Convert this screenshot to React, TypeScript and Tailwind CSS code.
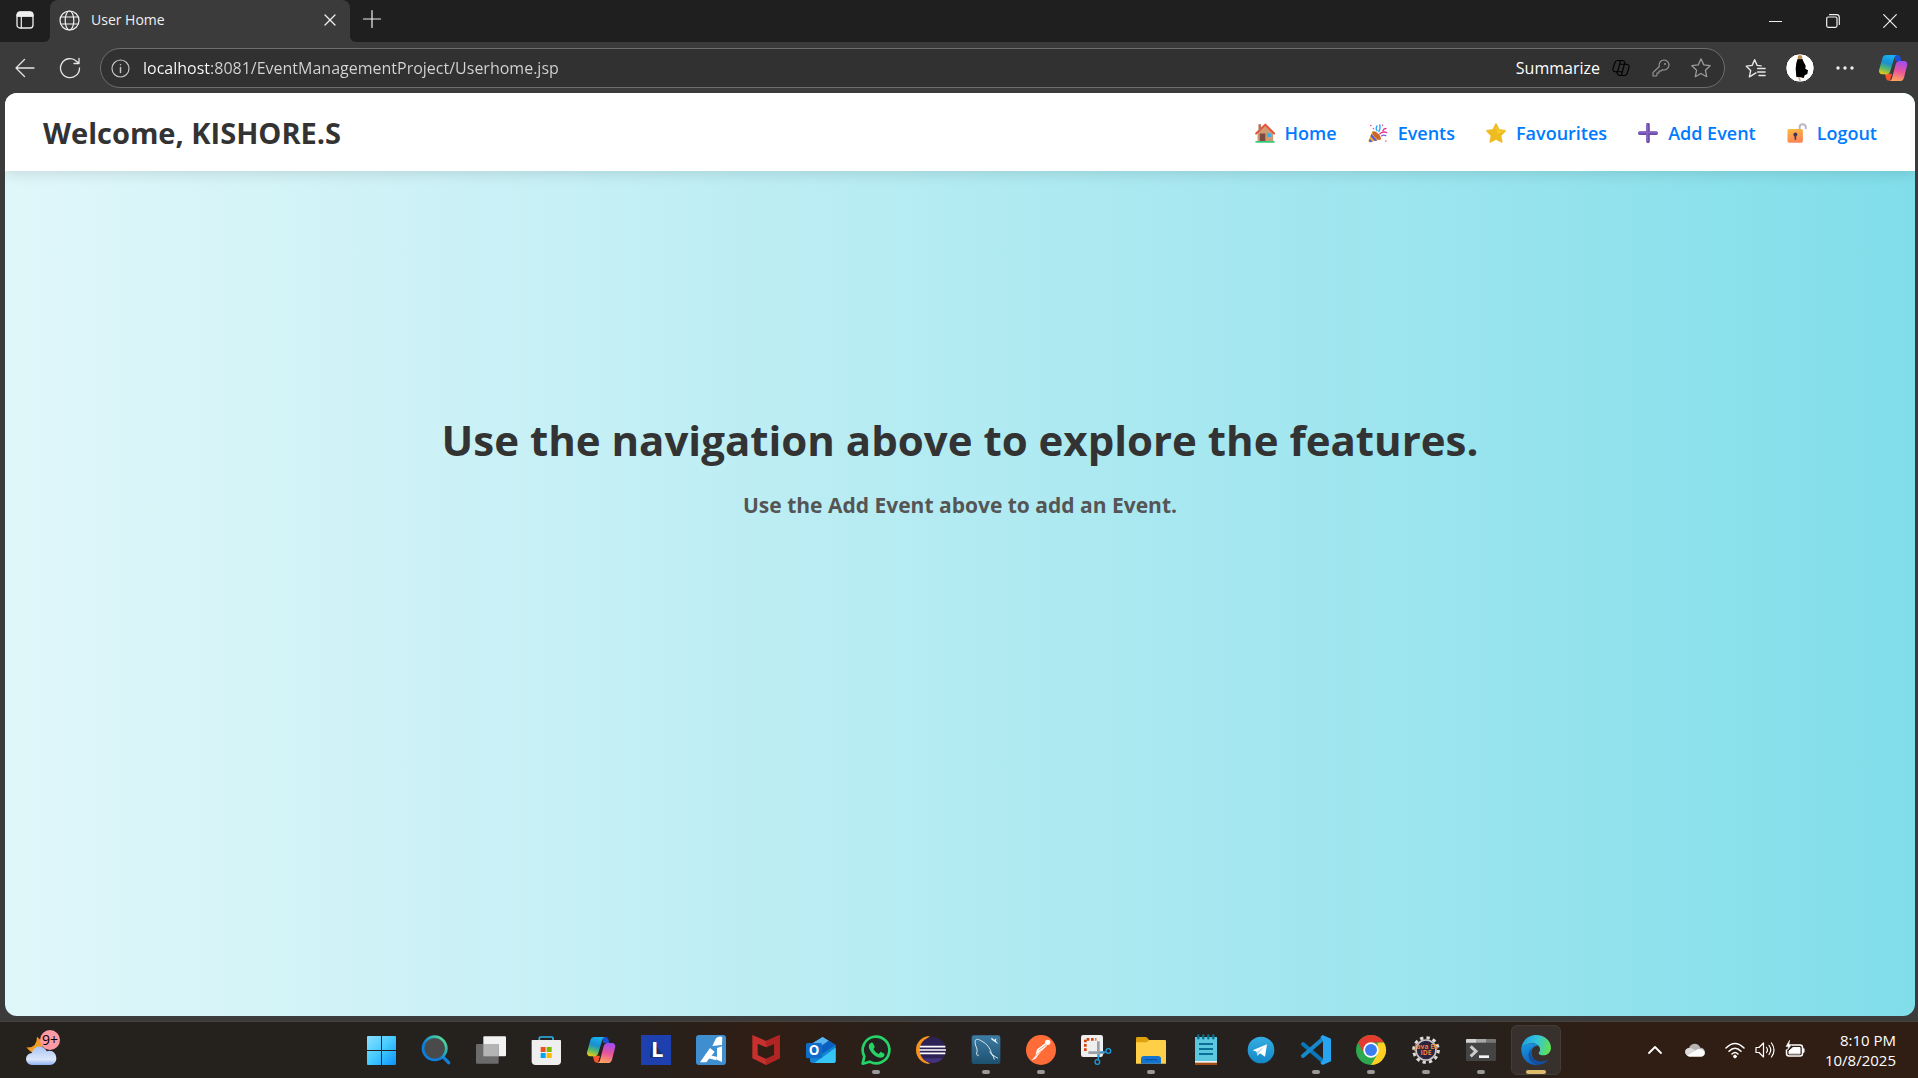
import type { ReactNode } from "react";

type IconProps = { children: ReactNode; className?: string; box?: string };

function Svg({ children, className = "size-5", box = "0 0 24 24" }: IconProps) {
  return (
    <svg
      viewBox={box}
      className={`shrink-0 ${className}`}
      fill="none"
      stroke="currentColor"
      strokeLinecap="round"
      strokeLinejoin="round"
      aria-hidden="true"
    >
      {children}
    </svg>
  );
}

function AppSvg({ children }: { children: ReactNode }) {
  return (
    <svg viewBox="0 0 90 90" className="size-[30px] overflow-visible" aria-hidden="true">
      {children}
    </svg>
  );
}

/* ---------- browser chrome ---------- */

function TabStrip() {
  return (
    <div className="flex h-[42px] items-center bg-[#3b3b3b] text-[#f0f0f0]">
      <button aria-label="Tab actions" className="flex h-full w-[50px] items-center justify-center rounded-br-md bg-[#1f1f1f] pb-0.5">
        <Svg className="size-[18px]" box="0 0 18 18">
          <rect x="1" y="1" width="16" height="16" rx="3" strokeWidth="1.3" />
          <path d="M1 5V4a3 3 0 0 1 3-3h10a3 3 0 0 1 3 3v1z" fill="currentColor" />
          <path d="M5.3 5v12" strokeWidth="1.2" />
        </Svg>
      </button>
      <div className="h-full w-[300px] bg-[#1f1f1f]">
        <div className="flex h-full items-center rounded-t-lg bg-[#3b3b3b] px-2 pb-0.5">
          <Svg className="ml-px size-[21px]" box="0 0 21 21">
            <g strokeWidth="1.2">
              <circle cx="10.5" cy="10.5" r="9.5" />
              <ellipse cx="10.5" cy="10.5" rx="4.3" ry="9.5" />
              <path d="M2 7h17M2 14h17" />
            </g>
          </Svg>
          <span className="ml-[11px] flex-1 text-sm">User Home</span>
          <button aria-label="Close tab" className="mr-1.5">
            <Svg className="size-3" box="0 0 12 12">
              <path d="M1 1l10 10M11 1L1 11" strokeWidth="1.3" />
            </Svg>
          </button>
        </div>
      </div>
      <div className="flex h-full flex-1 items-center rounded-bl-md bg-[#1f1f1f]">
        <button aria-label="New tab" className="ml-3 pb-1">
          <Svg className="size-5" box="0 0 20 20">
            <path d="M10 1.5v17M1.5 10h17" strokeWidth="1.2" />
          </Svg>
        </button>
        <div className="ml-auto flex h-full">
          <button aria-label="Minimize" className="flex w-[57px] items-center justify-center">
            <Svg className="size-[13px]" box="0 0 13 13">
              <path d="M0 6.5h13" strokeWidth="1.2" />
            </Svg>
          </button>
          <button aria-label="Restore" className="flex w-[57px] items-center justify-center">
            <Svg className="size-[14px]" box="0 0 14 14">
              <rect x="0.7" y="3" width="10.3" height="10.3" rx="1.5" strokeWidth="1.2" />
              <path d="M3.5 .7h7a2.800 2.800 0 0 1 2.800 2.800v7" strokeWidth="1.2" />
            </Svg>
          </button>
          <button aria-label="Close window" className="flex w-[57px] items-center justify-center">
            <Svg className="size-[14px]" box="0 0 14 14">
              <path d="M.7 .7l12.600 12.600M13.300 .7L.7 13.300" strokeWidth="1.2" />
            </Svg>
          </button>
        </div>
      </div>
    </div>
  );
}

const STAR = "M12 2l3 6.600 7 .9-5.200 4.900 1.400 7.100L12 18l-6.200 3.500 1.400-7.100L2 9.500l7-.9z";

function AddressBar() {
  return (
    <div className="flex h-[51px] items-center bg-[#3b3b3b] pt-px text-[#e6e6e6]">
      <button aria-label="Back" className="flex w-[50px] justify-center">
        <Svg className="size-5" box="0 0 20 20">
          <path d="M19 10H1M9.500 1.500L1 10l8.500 8.500" strokeWidth="1.3" />
        </Svg>
      </button>
      <button aria-label="Refresh" className="flex w-10 justify-center">
        <Svg className="size-[22px]" box="0 0 22 22">
          <path d="M20.500 11A9.500 9.500 0 1 1 17.500 4.200L20 6.500M20 1.500v5h-5" strokeWidth="1.3" />
        </Svg>
      </button>
      <div className="ml-2.5 flex h-10 flex-1 items-center rounded-full border border-[#6e6e6e] bg-[#313131] pr-3 pl-2.5">
        <Svg className="size-[19px] text-[#c4c4c4]" box="0 0 19 19">
          <circle cx="9.5" cy="9.5" r="8.5" strokeWidth="1.2" />
          <path d="M9.500 8.500v5M9.500 5.700v.1" strokeWidth="1.5" />
        </Svg>
        <input
          aria-label="Address"
          defaultValue="localhost:8081/EventManagementProject/Userhome.jsp"
          className="ml-[13px] min-w-0 flex-1 bg-[linear-gradient(90deg,#fff_68px,#d6d6d6_68px)] bg-clip-text text-base text-transparent outline-none"
        />
        <button className="text-base text-white">Summarize</button>
        <button aria-label="Copilot summary" className="ml-3">
          <Svg className="size-[18px] text-black" box="0 0 24 22">
            <g strokeWidth="1.5">
              <path d="M6 16H4.500C2 16 .7 14 1.400 11.500L3.800 4C4.500 2 5.700 1 7.500 1h6.300c1.500 0 2.500.8 3 2.300L17.500 6" />
              <path d="M18 6h1.500c2.500 0 3.800 2 3.100 4.500L20.200 18c-.7 2-1.900 3-3.700 3h-6.300c-1.500 0-2.500-.8-3-2.300L6.500 16" />
              <path d="M11.500 1l-4 15M16.500 6l-4 15M10 6h8M6 16h8" />
            </g>
          </Svg>
        </button>
        <button aria-label="Passwords" className="ml-[22px]">
          <Svg className="size-[18px] text-[#9a9a9a]" box="0 0 18 18">
            <path
              d="M12 1a5 5 0 1 1-1.700 9.700L9 12H7v2H5v2.200L4.300 17H1v-3.300l6.300-6.200A5 5 0 0 1 12 1z"
              strokeWidth="1.1"
            />
            <path d="M13 4.800v.2" strokeWidth="1.8" />
          </Svg>
        </button>
        <button aria-label="Add to favorites" className="ml-5">
          <Svg className="size-[22px] text-[#9a9a9a]">
            <path d={STAR} strokeWidth="1.4" />
          </Svg>
        </button>
      </div>
      <button aria-label="Favorites" className="ml-5">
        <Svg className="size-[21px]">
          <path
            d="M12.500 17L5 21.500l1.500-7.300L1.500 9.300l6.700-.9L11 2l2.900 6.400 4.600.6M14.500 12H23M14.500 16H23M16 20h7M18 9"
            strokeWidth="1.6"
          />
        </Svg>
      </button>
      <button aria-label="Profile" className="ml-[19px]">
        <svg viewBox="0 0 90 90" className="size-[30px]" aria-hidden="true">
          <circle cx="45" cy="45" r="43" fill="#fff" stroke="#222" strokeWidth="3" />
          <path d="M38 17h14l4 10 6 11-1 9 8 5-2 11-8 4-3 8-13-3-9 0-2-25 2-17z" fill="#000" />
          <path d="M38 15q1-9 7-9t7 9l-2 4H40z" fill="#b98d4c" />
          <path d="M38 73l4 7 2 6 4-2-4-12z" fill="#c8a898" />
        </svg>
      </button>
      <button aria-label="Settings and more" className="mr-5 ml-[21px]">
        <svg viewBox="0 0 18 6" className="h-1.5 w-[18px]" fill="#f0f0f0" aria-hidden="true">
          <circle cx="2" cy="3" r="1.7" />
          <circle cx="9" cy="3" r="1.7" />
          <circle cx="16" cy="3" r="1.7" />
        </svg>
      </button>
      <button aria-label="Copilot" className="mr-2.5 ml-1">
        <svg viewBox="0 0 90 90" className="size-[30px]" aria-hidden="true">
          <CopilotMark id="bar" />
        </svg>
      </button>
    </div>
  );
}

function CopilotMark({ id }: { id: string }) {
  return (
    <>
      <defs>
        <linearGradient id={`${id}-a`} x1="0.5" y1="0" x2="0.2" y2="1">
          <stop offset="0" stopColor="#18b0f0" />
          <stop offset="0.4" stopColor="#1a8fd0" />
          <stop offset="0.7" stopColor="#5bb969" />
          <stop offset="1" stopColor="#f5cc10" />
        </linearGradient>
        <linearGradient id={`${id}-b`} x1="0.6" y1="0" x2="0.4" y2="1">
          <stop offset="0" stopColor="#a04cf0" />
          <stop offset="0.5" stopColor="#e8549c" />
          <stop offset="1" stopColor="#ffa45c" />
        </linearGradient>
      </defs>
      <path d="M48 6h10c5 0 8 3 9 7l3 11H52z" fill="#1b4fd8" />
      <path d="M20 62h22l-6 21h-3c-5 0-8-3-9-7z" fill="#f4512c" />
      <path d="M25 6h33c-5 0-8 4-9 8L37 54c-2 7-6 10-12 10H14C6 64 1 58 4 49l9-33C15 9 19 6 25 6z" fill={`url(#${id}-a)`} />
      <path d="M66 84H33c5 0 8-4 9-8l11-42c2-7 6-10 12-10h12c8 0 13 6 10 15l-9 35c-2 7-6 10-12 10z" fill={`url(#${id}-b)`} />
    </>
  );
}

/* ---------- web page ---------- */

const houseIcon = (
  <>
    <path d="M7 28L31 5l24 23v29H7z" fill="#d09a72" />
    <path d="M3 32L31 5l27 27" fill="none" stroke="#e8503a" strokeWidth="6" strokeLinejoin="round" strokeLinecap="round" />
    <path d="M10 4h8v14l-8 7z" fill="#b77455" />
    <path d="M14 32h17v25H14z" fill="#7b4a42" />
    <path d="M36 31h13v12H36z" fill="#36b4f0" />
    <path d="M1 55h58v5H1z" fill="#37c878" />
  </>
);
const partyIcon = (
  <>
    <path d="M13 25l25 25L3 59q-3-1-2-4z" fill="#f8b032" />
    <path d="M10 33l18 20-8 2L7 41zM4 48l10 9-7 2-5-4z" fill="#5c5cd0" />
    <ellipse cx="26" cy="38" rx="7" ry="17" transform="rotate(-45 26 38)" fill="#c8642c" />
    <path d="M34 35q8-11 24-6M44 25q4-10 12-8" fill="none" stroke="#e83890" strokeWidth="4" />
    <path d="M28 25q-7-9 0-18M32 28q7-12 3-24" fill="none" stroke="#2ba8f0" strokeWidth="4" />
    <path d="M40 40q8-6 15 0" fill="none" stroke="#7c58dc" strokeWidth="4" />
    <g fill="#f04890">
      <circle cx="8" cy="8" r="2.5" />
      <circle cx="16" cy="17" r="2.5" />
      <circle cx="44" cy="7" r="2.5" />
      <circle cx="54" cy="55" r="2.5" />
    </g>
  </>
);
const starIcon = (
  <>
    <path
      d="M30 4l8 17 19 3-14 14 4 19-17-9-17 9 4-19L3 24l19-3z"
      fill="#eebb20"
      stroke="#eebb20"
      strokeWidth="6"
      strokeLinejoin="round"
    />
    <path d="M30 7l7 16 17 3-20 6z" fill="#f4cf38" />
  </>
);
const plusIcon = (
  <>
    <path d="M30 5v51M5 31h50" stroke="#6c4ca8" strokeWidth="11" strokeLinecap="round" />
    <path d="M28 5v49M5 29h50" stroke="#8664c4" strokeWidth="5" strokeLinecap="round" />
  </>
);
const lockIcon = (
  <>
    <defs>
      <linearGradient id="lock" x1="0" y1="0" x2="0.3" y2="1">
        <stop offset="0" stopColor="#f9bd3e" />
        <stop offset="1" stopColor="#fa8658" />
      </linearGradient>
    </defs>
    <path d="M38 24V13q0-9 9-9t10 9v5" fill="none" stroke="#bdb4c4" strokeWidth="6" />
    <rect x="1" y="18" width="47" height="42" rx="5" fill="url(#lock)" />
    <circle cx="25" cy="35" r="6" fill="#443058" />
    <path d="M25 38v11" stroke="#443058" strokeWidth="5" strokeLinecap="round" />
  </>
);

const links = [
  { label: "Home", icon: houseIcon },
  { label: "Events", icon: partyIcon },
  { label: "Favourites", icon: starIcon },
  { label: "Add Event", icon: plusIcon },
  { label: "Logout", icon: lockIcon },
];

function WebPage() {
  return (
    <div className="flex flex-1 bg-[#3b3b3b] pr-[3px] pb-[5px] pl-[5px]">
      <div className="flex flex-1 flex-col overflow-hidden rounded-xl bg-linear-to-r from-[#e0f7fa] to-[#80deea]">
        <header className="flex h-[78px] items-center justify-between bg-white px-[38px] pt-0.5 shadow-[0_4px_12px_rgba(0,0,0,0.1)]">
          <h2 className="text-[29px] font-bold text-[#333]">Welcome, KISHORE.S</h2>
          <nav className="flex gap-[31px]">
            {links.map((l) => (
              <a key={l.label} href="#" className="flex items-center gap-2.5 text-lg font-semibold text-[#007bff]">
                <svg viewBox="0 0 60 61" className="size-5" aria-hidden="true">
                  {l.icon}
                </svg>
                {l.label}
              </a>
            ))}
          </nav>
        </header>
        <main className="flex flex-col items-center pt-[239px] text-center">
          <h1 className="text-[42px] leading-[60px] font-bold text-[#333]">
            Use the navigation above to explore the features.
          </h1>
          <p className="mt-5 text-[21px] leading-[30px] font-bold text-[#555]">
            Use the Add Event above to add an Event.
          </p>
        </main>
      </div>
    </div>
  );
}

/* ---------- taskbar ---------- */

type App = { name: string; running?: boolean; active?: boolean; icon: ReactNode };

const apps: App[] = [
  {
    name: "Start",
    icon: (
      <>
        <defs>
          <linearGradient id="win" gradientUnits="userSpaceOnUse" x1="0" y1="0" x2="90" y2="90">
            <stop offset="0" stopColor="#8fe2ff" />
            <stop offset="0.5" stopColor="#46cbff" />
            <stop offset="1" stopColor="#0a93fb" />
          </linearGradient>
        </defs>
        <path d="M5 3h40v42H3V5zM48 3h40l2 2v40H48zM3 48h42v42H5l-2-2zM48 48h42v40l-2 2H48z" fill="url(#win)" />
      </>
    ),
  },
  {
    name: "Search",
    icon: (
      <>
        <defs>
          <linearGradient id="find" x1="0" y1="1" x2="1" y2="0">
            <stop offset="0.4" stopColor="#0f7edb" />
            <stop offset="0.7" stopColor="#33b6b0" />
            <stop offset="1" stopColor="#6fe88a" />
          </linearGradient>
        </defs>
        <path d="M65 65l18 18" stroke="#1180d8" strokeWidth="10" strokeLinecap="round" />
        <circle cx="41" cy="40" r="35" fill="#4a4a4a" stroke="url(#find)" strokeWidth="8" />
      </>
    ),
  },
  {
    name: "Task view",
    icon: (
      <>
        <rect x="22" y="4" width="68" height="60" rx="3" fill="#f2f2f2" />
        <rect x="0" y="27" width="68" height="59" rx="3" fill="#6b6b6b" />
        <path d="M22 27h46v37H22z" fill="#b4b4b4" />
      </>
    ),
  },
  {
    name: "Microsoft Store",
    icon: (
      <>
        <path d="M25 20V9q0-3 3-3h35q3 0 3 3v11" fill="none" stroke="#2bb5ea" strokeWidth="5" />
        <path d="M2 17q0-2 2-2h84q2 0 2 2v62q0 11-12 11H14Q2 90 2 79z" fill="#efefef" />
        <path d="M29 36h15v15H29z" fill="#f25022" />
        <path d="M47 36h15v15H47z" fill="#7fba00" />
        <path d="M29 54h15v15H29z" fill="#00a4ef" />
        <path d="M47 54h15v15H47z" fill="#ffb900" />
      </>
    ),
  },
  { name: "Copilot", icon: <CopilotMark id="task" /> },
  {
    name: "L",
    icon: (
      <>
        <path d="M0 0h90v90H0z" fill="#1e40af" />
        <path d="M34 18l-8 50h36l6-6z" fill="#12306a" />
        <text x="30" y="65" fontSize="66" fontWeight="700" fill="#fff">
          L
        </text>
      </>
    ),
  },
  {
    name: "Design studio",
    icon: (
      <>
        <rect width="90" height="90" rx="9" fill="#3e8ed0" />
        <path d="M60 10q8-8 19-4l-1 24-29 3zM42 39l14 11-25 32H12zM63 39l15-5v47l-15-7z" fill="#fff" />
        <path d="M28 57l36 9-3 10-30-8z" fill="#fff" />
      </>
    ),
  },
  {
    name: "McAfee",
    icon: (
      <>
        <path d="M4 0l41 18L86 0v70L45 90 4 70zM20 26v34l25 12 25-12V26L45 37z" fill="#c8302e" fillRule="evenodd" />
        <path d="M86 0v70L45 90V72l25-12V26L45 37V18z" fill="#b02424" />
      </>
    ),
  },
  {
    name: "Outlook",
    icon: (
      <>
        <path d="M12 29L50 6l39 24v48q0 6-6 6H20q-8 0-8-8z" fill="#1384d4" />
        <path d="M12 29L50 6l18 11-40 26z" fill="#5bb4ee" />
        <path d="M68 17l21 13-50 32V40z" fill="#0b5fc0" />
        <path d="M89 38v40q0 6-6 6H25z" fill="#36c5f4" />
        <rect x="0" y="24" width="48" height="46" rx="5" fill="#0f6cc8" />
        <text x="24" y="61" fontSize="40" fontWeight="700" textAnchor="middle" fill="#fff">
          O
        </text>
      </>
    ),
  },
  {
    name: "WhatsApp",
    running: true,
    icon: (
      <>
        <path
          d="M5 86l5-22a40 40 0 1 1 16 16z"
          fill="#25211e"
          stroke="#25d366"
          strokeWidth="8"
          strokeLinejoin="round"
        />
        <path
          d="M28 25c3-3 7-3 9 1l4 9c1 2-3 6-4 7 4 7 9 12 16 15l6-7 11 6c2 2 0 9-5 11-8 4-21-2-30-11S18 33 28 25z"
          fill="#25d366"
        />
      </>
    ),
  },
  {
    name: "Eclipse",
    icon: (
      <>
        <path d="M42 3a42 42 0 0 0 0 84A52 52 0 0 1 42 3z" fill="#f7941e" />
        <circle cx="50" cy="45" r="39" fill="#2c2255" />
        <path d="M20 70a39 39 0 0 0 60 0z" fill="#44337c" />
        <path d="M12 35h76M10 45h80M12 55h76" stroke="#fff" strokeWidth="5" />
      </>
    ),
  },
  {
    name: "MySQL Workbench",
    running: true,
    icon: (
      <>
        <defs>
          <linearGradient id="sql" x1="0" y1="0" x2="0" y2="1">
            <stop offset="0" stopColor="#3e7ca4" />
            <stop offset="1" stopColor="#1d506f" />
          </linearGradient>
        </defs>
        <rect x="2" y="1" width="86" height="86" rx="7" fill="url(#sql)" />
        <path
          d="M23 59c-1 5-5 4-6-2-1-5 3-6 1-15-2-7-8-16-5-26 3-6 13-2 20 3 16 8 24 21 28 35 4 8 11 10 20 16M66 60l4 14M56 50l10 14"
          fill="none"
          stroke="#d6e6ee"
          strokeWidth="3"
        />
        <path d="M62 8l8 6 6-4-1 8 7 9-9-5-7-5-6-5z" fill="#e4f0f6" />
      </>
    ),
  },
  {
    name: "Postman",
    running: true,
    icon: (
      <>
        <circle cx="45" cy="45" r="45" fill="#ff6c37" />
        <circle cx="65" cy="22" r="8" fill="#fff" />
        <path d="M33 43l24-18 6 7-17 17-18 22-12 6 12-14z" fill="#fff" />
        <path d="M38 46l22-16M28 63l18-16" stroke="#ff6c37" strokeWidth="2" />
      </>
    ),
  },
  {
    name: "Snipping Tool",
    icon: (
      <>
        <rect x="0" y="0" width="66" height="66" rx="7" fill="#efefef" />
        <path d="M13 48V13h33" fill="none" stroke="#d4440c" strokeWidth="8" strokeDasharray="8 5" />
        <path d="M22 53h48M52 19v48" fill="none" stroke="#9aa0a6" strokeWidth="8" />
        <circle cx="82" cy="48" r="7" fill="none" stroke="#1e9be0" strokeWidth="4" />
        <circle cx="49" cy="81" r="7" fill="none" stroke="#1e9be0" strokeWidth="4" />
        <path d="M56 52l20-1M54 58l-3 17" stroke="#1e9be0" strokeWidth="4" />
      </>
    ),
  },
  {
    name: "File Explorer",
    running: true,
    icon: (
      <>
        <path d="M0 10q0-4 4-4h24q4 0 7 4l5 6H86q4 0 4 5v20H0z" fill="#dfa00c" />
        <path d="M0 22h32l8-7h46q4 0 4 4v67H0z" fill="#ffcf48" />
        <path d="M15 86V72q0-9 9-9h42q9 0 9 9v14z" fill="#1273d0" />
        <path d="M27 74h36" stroke="#0a4c9c" strokeWidth="3" />
      </>
    ),
  },
  {
    name: "Notepad",
    icon: (
      <>
        <path d="M12 79h66v11H12z" fill="#a04e14" />
        <path d="M12 76h66v7H12z" fill="#f0f0f0" />
        <path d="M12 6h66v72H12z" fill="#5cc8e0" />
        <path d="M24 27h42M24 42h42M24 57h42" stroke="#0b6e96" strokeWidth="6" />
        <path d="M22 1v9M37 1v9M52 1v9M67 1v9" stroke="#0b708c" strokeWidth="7" strokeLinecap="round" />
      </>
    ),
  },
  {
    name: "Telegram",
    icon: (
      <>
        <defs>
          <linearGradient id="tg" x1="0" y1="0" x2="0" y2="1">
            <stop offset="0" stopColor="#35ade1" />
            <stop offset="1" stopColor="#1488c8" />
          </linearGradient>
        </defs>
        <circle cx="45" cy="45" r="40" fill="url(#tg)" />
        <path d="M20 46l43-18-6 37-15-10-8 7-2-12z" fill="#fff" />
        <path d="M32 50l22-15-15 18-5 9z" fill="#b8dced" />
      </>
    ),
  },
  {
    name: "Visual Studio Code",
    running: true,
    icon: (
      <>
        <path d="M6 27L65 78" stroke="#0877b9" strokeWidth="12" strokeLinecap="round" />
        <path d="M6 63L65 12" stroke="#1688cc" strokeWidth="12" strokeLinecap="round" />
        <path d="M65 0l25 11v68L65 90l-7-6 8-10V17l-8-11z" fill="#27a4f2" />
      </>
    ),
  },
  {
    name: "Chrome",
    running: true,
    icon: (
      <>
        <circle cx="45" cy="45" r="45" fill="#2da94f" />
        <path d="M45 0a45 45 0 0 1 39 22.500H45L25 57 6 22.500A45 45 0 0 1 45 0z" fill="#e33b2e" />
        <path d="M84 22.500A45 45 0 0 1 45 90l20-34V23z" fill="#fdd023" />
        <circle cx="45" cy="45" r="23" fill="#fff" />
        <circle cx="45" cy="45" r="18" fill="#3b7cf0" />
      </>
    ),
  },
  {
    name: "Java EE IDE",
    running: true,
    icon: (
      <>
        <circle cx="45" cy="45" r="37" fill="none" stroke="#dcdcdc" strokeWidth="9" strokeDasharray="10 9.4" />
        <circle cx="45" cy="45" r="30" fill="#2c2340" stroke="#c8c8c8" strokeWidth="5" />
        <g fill="#ee8434" fontSize="20" fontWeight="700" textAnchor="middle">
          <text x="45" y="41">
            Java EE
          </text>
          <text x="45" y="59">
            IDE
          </text>
        </g>
      </>
    ),
  },
  {
    name: "Terminal",
    running: true,
    icon: (
      <>
        <rect x="0" y="12" width="90" height="66" rx="4" fill="#444" />
        <path d="M0 23v-8q0-3 3-3h27v11z" fill="#d4d4d4" />
        <path d="M30 12h30v11H30z" fill="#a8a8a8" />
        <path d="M60 12h27q3 0 3 3v8H60z" fill="#777" />
        <path d="M14 34l16 15-16 15" fill="none" stroke="#ccc" strokeWidth="9" />
        <path d="M39 65h30" stroke="#f4f4f4" strokeWidth="8" />
      </>
    ),
  },
  {
    name: "Microsoft Edge",
    running: true,
    active: true,
    icon: (
      <>
        <defs>
          <linearGradient id="edge-a" x1="0" y1="0.3" x2="1" y2="0.5">
            <stop offset="0" stopColor="#1c9fe0" />
            <stop offset="0.5" stopColor="#34c4dc" />
            <stop offset="1" stopColor="#62e052" />
          </linearGradient>
          <linearGradient id="edge-b" x1="0" y1="0" x2="0.4" y2="1">
            <stop offset="0" stopColor="#1b9de2" />
            <stop offset="1" stopColor="#0f5fb8" />
          </linearGradient>
        </defs>
        <path d="M1 40C4 16 22 0 45 0c27 0 45 19 45 38 0 15-12 23-23 23-9 0-15-3-14-7 3-4 4-6 4-11 0-10-10-18-23-18C18 25 6 32 1 40z" fill="url(#edge-a)" />
        <path d="M1 40c5-8 17-15 33-15 8 0 15 3 19 8-10-3-22 6-22 20 0 16 14 32 33 29-8 6-13 8-20 8C19 90-1 68 1 40z" fill="url(#edge-b)" />
        <path d="M37 37c-11 6-11 23-1 33 12 12 33 12 47 1-9 15-24 20-36 17-16-4-26-17-24-31 1-9 6-16 14-20z" fill="#134f9e" />
      </>
    ),
  },
];

function Taskbar() {
  return (
    <footer className="grid h-[57px] grid-cols-[1fr_auto_1fr] items-center border-t border-[#46423e] bg-[linear-gradient(90deg,#25211d_0%,#25211e_32%,#301e14_40%,#26211e_50%,#25211e_75%,#301e14_84%,#301e14_100%)]">
      <button aria-label="Weather, 9+ notifications" className="relative mb-1 ml-[26px] h-9 w-[34px]">
        <svg viewBox="0 0 102 108" className="h-9 w-[34px]" aria-hidden="true">
          <defs>
            <linearGradient id="cloud" x1="0" y1="0" x2="0" y2="1">
              <stop offset="0" stopColor="#a9c4f6" />
              <stop offset="0.7" stopColor="#dbe6fa" />
              <stop offset="1" stopColor="#8fb0f0" />
            </linearGradient>
          </defs>
          <path d="M33 20q24 16 12 48-20 14-44-16 32 3 32-32z" fill="#f49c20" />
          <path d="M18 105a18 18 0 0 1 0-36C22 45 54 43 62 64c16-6 29 5 29 21 0 12-8 20-19 20z" fill="url(#cloud)" />
        </svg>
        <span className="absolute top-0 left-3.5 flex size-5 items-center justify-center rounded-full bg-[#ff99a4] text-sm text-black">
          9+
        </span>
      </button>
      <div className="mr-0.5 flex">
        {apps.map((a) => (
          <div key={a.name} className="flex w-[55px] justify-center">
            <button
              aria-label={a.name}
              className={`relative flex h-[50px] w-[50px] items-center justify-center rounded-md border ${
                a.active ? "border-[#463c37] bg-[#38302c]" : "border-transparent"
              }`}
            >
              <AppSvg>{a.icon}</AppSvg>
              {a.running && (
                <span
                  className={`absolute bottom-0 h-1 rounded-full ${a.active ? "w-5 bg-[#dcbc6c]" : "w-2 bg-[#999]"}`}
                />
              )}
            </button>
          </div>
        ))}
      </div>
      <div className="flex items-center justify-end pr-[22px] text-white">
        <button aria-label="Show hidden icons">
          <Svg className="size-4" box="0 0 16 16">
            <path d="M2 11l6-6 6 6" strokeWidth="1.8" />
          </Svg>
        </button>
        <button aria-label="OneDrive" className="ml-[22px]">
          <svg viewBox="0 0 60 42" className="h-3.5 w-5" aria-hidden="true">
            <path d="M12 40C-3 37-3 17 12 15 18-1 40-2 46 14c13 0 17 14 12 21z" fill="#b8b4b2" />
            <path d="M12 15q10-2 20 8L4 36Q-6 18 12 15z" fill="#dedcda" />
            <path d="M6 37l28-16q6-5 13-2c14 0 17 21 2 22H14q-5 0-8-4z" fill="#fff" />
          </svg>
        </button>
        <button aria-label="Network, volume and battery" className="ml-5 flex items-center gap-2.5">
          <Svg className="size-5" box="0 0 20 20">
            <path d="M1 8q9-9 18 0M4 11.200q6-6 12 0M7 14q3-3 6 0" strokeWidth="1.5" />
            <circle cx="10" cy="16.5" r="1.4" fill="currentColor" />
          </Svg>
          <Svg className="size-5" box="0 0 20 20">
            <path d="M1 7.500h3L8.500 3v14L4 12.500H1zM11.500 7.500q2 2.500 0 5M14 5.500q3.500 4.500 0 9M16.500 3q5 7 0 14" strokeWidth="1.2" />
          </Svg>
          <Svg className="size-5" box="0 0 20 20">
            <path d="M7 5h8q2.500 0 2.500 2.500v6Q17.500 16 15 16H4q-2.500 0-2.500-2.500V10M18.800 9v3" strokeWidth="1.5" />
            <path d="M4 13.500V11l4-3.500h7v6z" fill="currentColor" strokeWidth="1" />
            <path d="M4.500 .5L1 6.500h2.500L2.500 10l4-5.500H4z" fill="currentColor" strokeWidth="0.5" />
          </Svg>
        </button>
        <button className="ml-5 text-right text-[15px] leading-5">
          8:10 PM
          <br />
          10/8/2025
        </button>
      </div>
    </footer>
  );
}

export default function App() {
  return (
    <div className="flex min-h-screen flex-col font-['Open_Sans','Noto_Sans',sans-serif]">
      <TabStrip />
      <AddressBar />
      <WebPage />
      <Taskbar />
    </div>
  );
}
